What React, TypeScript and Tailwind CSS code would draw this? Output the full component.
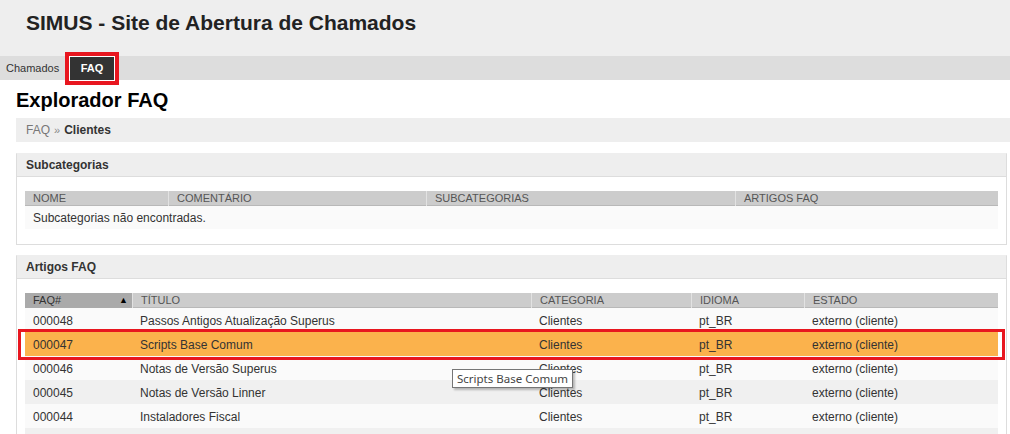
import React from 'react';

const artigos = [
    { id: '000048', titulo: 'Passos Antigos Atualização Superus' },
    { id: '000047', titulo: 'Scripts Base Comum', selected: true },
    { id: '000046', titulo: 'Notas de Versão Superus' },
    { id: '000045', titulo: 'Notas de Versão Linner' },
    { id: '000044', titulo: 'Instaladores Fiscal' },
];

const Panel = ({ title, children, className = '' }: { title: string; children: React.ReactNode; className?: string }) => (
    <section className={`w-[991px] border border-[#ddd] border-t-[#eee] ${className}`}>
        <h3 className="h-[23px] bg-[#eee] border-b border-[#ddd] pl-[9px] flex items-center text-[12px] font-bold text-[#333]">
            {title}
        </h3>
        {children}
    </section>
);

const App = () => {
    return (
        <div className="w-[1010px] h-[434px] overflow-hidden bg-white font-['Liberation_Sans',Arial,sans-serif] text-[#333]">
            {/* Topo */}
            <header className="h-[56px] bg-[#eee] pl-[26px] pt-[11px]">
                <h1 className="text-[21px] leading-[24px] font-bold text-[#222]">SIMUS - Site de Abertura de Chamados</h1>
            </header>

            <nav className="h-[24px] bg-[#ddd] flex text-[11px]">
                <a className="w-[70px] pl-[6px] flex items-center text-[#333]">Chamados</a>
                <a className="relative w-[44px] bg-[#333] text-white font-bold flex items-center justify-center">
                    FAQ
                    <span className="absolute -left-[5px] -right-[5px] -top-[4px] -bottom-[5px] border-[4px] border-[#e8161f] shadow-[inset_0_0_0_1px_#fff]" />
                </a>
            </nav>

            <main className="pl-[16px]">
                <h2 className="mt-[8px] mb-[6px] text-[20px] leading-[24px] font-bold text-black">Explorador FAQ</h2>

                <div className="h-[24px] bg-[#eee] pl-[10px] flex items-center gap-[4px] text-[12px]">
                    <span className="text-[#777]">FAQ</span>
                    <span className="text-[#888] text-[11px]">»</span>
                    <span className="font-bold text-[#333]">Clientes</span>
                </div>

                {/* Subcategorias */}
                <Panel title="Subcategorias" className="mt-[11px]">
                    <div className="pt-[14px] pb-[15px] px-[8px]">
                        <div className="grid grid-cols-[143px_258px_309px_1fr] h-[15px] bg-[#ccc] border-b border-[#b8b8b8] text-[11px] text-[#555] leading-[15px]">
                            <div className="pl-[8px]">NOME</div>
                            <div className="pl-[8px] border-l border-[#e2e2e2]">COMENTÁRIO</div>
                            <div className="pl-[8px] border-l border-[#e2e2e2]">SUBCATEGORIAS</div>
                            <div className="pl-[8px] border-l border-[#e2e2e2]">ARTIGOS FAQ</div>
                        </div>
                        <div className="h-[23px] bg-[#fafafa] pl-[8px] flex items-center text-[12px]">
                            Subcategorias não encontradas.
                        </div>
                    </div>
                </Panel>

                {/* Artigos FAQ */}
                <Panel title="Artigos FAQ" className="mt-[10px]">
                    <div className="relative pt-[14px] px-[8px]">
                        <div className="grid grid-cols-[107px_399px_160px_113px_1fr] h-[15px] bg-[#ccc] border-b border-[#b8b8b8] text-[11px] text-[#555] leading-[15px]">
                            <div className="pl-[8px] pr-[4px] bg-[#aaa] text-[#333] flex justify-between">
                                <span>FAQ#</span>
                                <span className="text-[9px] text-black">▲</span>
                            </div>
                            <div className="pl-[8px] border-l border-[#e2e2e2]">TÍTULO</div>
                            <div className="pl-[8px] border-l border-[#e2e2e2]">CATEGORIA</div>
                            <div className="pl-[8px] border-l border-[#e2e2e2]">IDIOMA</div>
                            <div className="pl-[8px] border-l border-[#e2e2e2]">ESTADO</div>
                        </div>

                        {artigos.map((a, i) => (
                            <div
                                key={a.id}
                                className={`relative grid grid-cols-[107px_399px_160px_113px_1fr] h-[24px] items-center text-[12px] ${
                                    a.selected ? 'bg-[#fbb24c] z-10' : i % 2 === 0 ? 'bg-[#fafafa]' : 'bg-[#f0f0f0]'
                                }`}
                            >
                                <div className="pl-[8px] pt-[2px]">{a.id}</div>
                                <div className="pl-[8px] pt-[2px]">{a.titulo}</div>
                                <div className="pl-[8px] pt-[2px]">Clientes</div>
                                <div className="pl-[8px] pt-[2px]">pt_BR</div>
                                <div className="pl-[8px] pt-[2px]">externo (cliente)</div>
                                {a.selected && (
                                    <span className="absolute -left-[7px] -right-[7px] -top-[3px] -bottom-[4px] border-[3px] border-[#e8161f]" />
                                )}
                            </div>
                        ))}
                        <div className="h-[24px] bg-[#f0f0f0]" />

                        {/* tooltip */}
                        <div className="absolute z-20 left-[435px] top-[90px] h-[19px] px-[4px] bg-white border border-[#767676] shadow-[2px_2px_2px_rgba(0,0,0,0.25)] flex items-center text-[11.5px] text-[#444] font-['Noto_Sans','Open_Sans',sans-serif] whitespace-nowrap">
                            Scripts Base Comum
                        </div>
                    </div>
                </Panel>
            </main>
        </div>
    );
};

export default App;
